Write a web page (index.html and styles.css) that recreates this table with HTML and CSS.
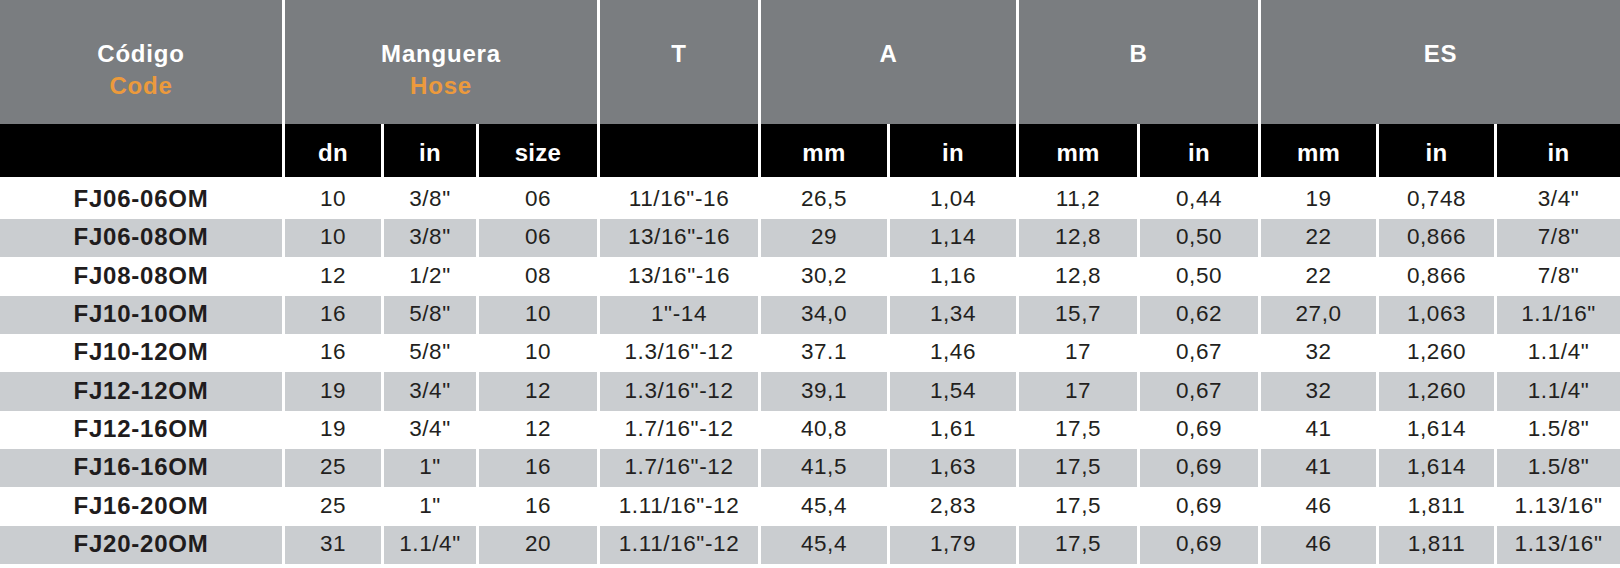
FILE: index.html
```html
<!DOCTYPE html>
<html lang="es">
<head>
<meta charset="utf-8">
<title>FJ OM</title>
<link rel="stylesheet" href="styles.css">
</head>
<body>
<table class="spec">
  <colgroup>
    <col class="c-code">
    <col class="c-dn">
    <col class="c-in">
    <col class="c-size">
    <col class="c-t">
    <col class="c-amm">
    <col class="c-ain">
    <col class="c-bmm">
    <col class="c-bin">
    <col class="c-esmm">
    <col class="c-esin">
    <col class="c-esin2">
  </colgroup>
  <thead>
    <tr class="group">
      <th>Código<span class="en">Code</span></th>
      <th colspan="3">Manguera<span class="en">Hose</span></th>
      <th>T</th>
      <th colspan="2">A</th>
      <th colspan="2">B</th>
      <th colspan="3">ES</th>
    </tr>
    <tr class="units">
      <th></th>
      <th>dn</th>
      <th>in</th>
      <th>size</th>
      <th></th>
      <th>mm</th>
      <th>in</th>
      <th>mm</th>
      <th>in</th>
      <th>mm</th>
      <th>in</th>
      <th>in</th>
    </tr>
  </thead>
  <tbody>
    <tr><td>FJ06-06OM</td><td>10</td><td>3/8"</td><td>06</td><td>11/16"-16</td><td>26,5</td><td>1,04</td><td>11,2</td><td>0,44</td><td>19</td><td>0,748</td><td>3/4"</td></tr>
    <tr><td>FJ06-08OM</td><td>10</td><td>3/8"</td><td>06</td><td>13/16"-16</td><td>29</td><td>1,14</td><td>12,8</td><td>0,50</td><td>22</td><td>0,866</td><td>7/8"</td></tr>
    <tr><td>FJ08-08OM</td><td>12</td><td>1/2"</td><td>08</td><td>13/16"-16</td><td>30,2</td><td>1,16</td><td>12,8</td><td>0,50</td><td>22</td><td>0,866</td><td>7/8"</td></tr>
    <tr><td>FJ10-10OM</td><td>16</td><td>5/8"</td><td>10</td><td>1"-14</td><td>34,0</td><td>1,34</td><td>15,7</td><td>0,62</td><td>27,0</td><td>1,063</td><td>1.1/16"</td></tr>
    <tr><td>FJ10-12OM</td><td>16</td><td>5/8"</td><td>10</td><td>1.3/16"-12</td><td>37.1</td><td>1,46</td><td>17</td><td>0,67</td><td>32</td><td>1,260</td><td>1.1/4"</td></tr>
    <tr><td>FJ12-12OM</td><td>19</td><td>3/4"</td><td>12</td><td>1.3/16"-12</td><td>39,1</td><td>1,54</td><td>17</td><td>0,67</td><td>32</td><td>1,260</td><td>1.1/4"</td></tr>
    <tr><td>FJ12-16OM</td><td>19</td><td>3/4"</td><td>12</td><td>1.7/16"-12</td><td>40,8</td><td>1,61</td><td>17,5</td><td>0,69</td><td>41</td><td>1,614</td><td>1.5/8"</td></tr>
    <tr><td>FJ16-16OM</td><td>25</td><td>1"</td><td>16</td><td>1.7/16"-12</td><td>41,5</td><td>1,63</td><td>17,5</td><td>0,69</td><td>41</td><td>1,614</td><td>1.5/8"</td></tr>
    <tr><td>FJ16-20OM</td><td>25</td><td>1"</td><td>16</td><td>1.11/16"-12</td><td>45,4</td><td>2,83</td><td>17,5</td><td>0,69</td><td>46</td><td>1,811</td><td>1.13/16"</td></tr>
    <tr><td>FJ20-20OM</td><td>31</td><td>1.1/4"</td><td>20</td><td>1.11/16"-12</td><td>45,4</td><td>1,79</td><td>17,5</td><td>0,69</td><td>46</td><td>1,811</td><td>1.13/16"</td></tr>
  </tbody>
</table>
</body>
</html>
```

FILE: styles.css
```css
html, body {
  margin: 0;
  padding: 0;
  background: #ffffff;
}

body {
  font-family: "Liberation Sans", Arial, Helvetica, sans-serif;
  color: #231f20;
}

.spec {
  width: 1620px;
  table-layout: fixed;
  border-collapse: separate;
  border-spacing: 0;
}

.c-code { width: 282px; }
.c-dn { width: 99px; }
.c-in { width: 95px; }
.c-size { width: 121px; }
.c-t { width: 161px; }
.c-amm { width: 129px; }
.c-ain { width: 129px; }
.c-bmm { width: 121px; }
.c-bin { width: 121px; }
.c-esmm { width: 118px; }
.c-esin { width: 118px; }
.c-esin2 { width: 126px; }

.spec th,
.spec td {
  padding: 0;
  text-align: center;
  white-space: nowrap;
}

.spec th + th,
.spec td + td {
  border-left: 3px solid #ffffff;
}

.group th {
  height: 124px;
  box-sizing: border-box;
  background: #7a7d80;
  color: #ffffff;
  font-size: 24px;
  font-weight: bold;
  letter-spacing: 0.8px;
  line-height: 32px;
  vertical-align: top;
  padding-top: 38px;
}

.group .en {
  display: block;
  color: #ec9a3c;
}

.units th {
  height: 53px;
  box-sizing: border-box;
  background: #000000;
  color: #ffffff;
  font-size: 24px;
  font-weight: bold;
  letter-spacing: 0.3px;
  vertical-align: middle;
  padding-top: 4px;
}

.spec td {
  height: 38.35px;
  box-sizing: border-box;
  font-size: 22.5px;
  letter-spacing: 0.6px;
  vertical-align: middle;
  padding-bottom: 2px;
}

.spec tbody tr:first-child td {
  height: 42px;
  border-top: 3.65px solid #ffffff;
}

.spec tbody tr:nth-child(even) td {
  background: #cacdd0;
}

.spec td:first-child {
  font-size: 24px;
  font-weight: bold;
  letter-spacing: 0.75px;
  color: #1f1c1d;
}
```
